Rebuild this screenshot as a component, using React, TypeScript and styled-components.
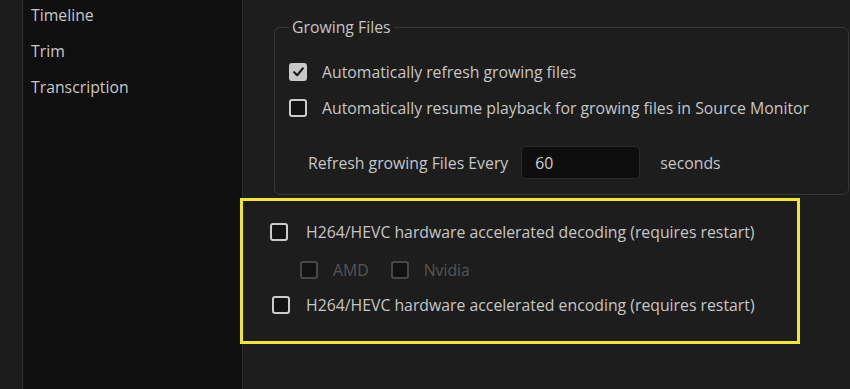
import React from "react";
import styled, { createGlobalStyle } from "styled-components";

const Global = createGlobalStyle`
  html, body { margin: 0; padding: 0; background: #1d1d1d; }
  body { font-family: "Open Sans", "Noto Sans", sans-serif; }
  * { box-sizing: border-box; }
`;

const Page = styled.div`
  display: flex;
  width: 850px;
  height: 389px;
  overflow: hidden;
  background: #1d1d1d;
  color: #c6c6c6;
  font-size: 15.8px;
`;

const LeftStrip = styled.div`
  width: 23px;
  flex: none;
  background: #1b1b1b;
  border-right: 1px solid #2e2e2e;
`;

const Sidebar = styled.nav`
  width: 220px;
  flex: none;
  background: #0f0f0f;
  border-left: 1px solid #161616;
  border-right: 1px solid #2d2d2d;
  display: flex;
  flex-direction: column;
  gap: 16px;
  padding: 5px 0 0 7px;
`;

const NavItem = styled.div`
  line-height: 20px;
  height: 20px;
  color: #c8c8c8;
`;

const Main = styled.main`
  flex: 1;
  min-width: 0;
  padding: 17px 0 0 31px;
  display: flex;
  flex-direction: column;
  align-items: flex-start;
`;

const Group = styled.fieldset`
  margin: 0;
  width: 575px;
  border: 1px solid #353535;
  border-radius: 6px;
  padding: 25px 14px 15px 14px;
  display: flex;
  flex-direction: column;
`;

const Legend = styled.legend`
  padding: 0 3px;
  line-height: 20px;
  color: #c4c4c4;
`;

const Row = styled.label<{ $indent?: number; $gap?: number; $top?: number }>`
  display: flex;
  align-items: center;
  height: 20px;
  line-height: 20px;
  margin-top: ${(p) => p.$top ?? 0}px;
  padding-left: ${(p) => p.$indent ?? 0}px;
  gap: ${(p) => p.$gap ?? 15}px;
  white-space: nowrap;
`;

const Box = styled.span<{ $checked?: boolean; $disabled?: boolean }>`
  width: 18px;
  height: 18px;
  flex: none;
  border-radius: 3px;
  border: 2px solid ${(p) => (p.$disabled ? "#474747" : "#cacaca")};
  background: ${(p) => (p.$checked ? "#c8c8c8" : "#121212")};
  display: flex;
  align-items: center;
  justify-content: center;
`;

const Label = styled.span<{ $disabled?: boolean }>`
  color: ${(p) => (p.$disabled ? "#555555" : "#c6c6c6")};
`;

const FieldRow = styled.div`
  display: flex;
  align-items: center;
  margin-top: 28px;
  padding-left: 19px;
  height: 33px;
`;

const NumberInput = styled.div`
  width: 119px;
  height: 33px;
  margin-left: 13px;
  margin-right: 20px;
  background: #0e0e0e;
  border: 1px solid #2a2a2a;
  border-radius: 4px;
  display: flex;
  align-items: center;
  padding-left: 13px;
  color: #cfcfcf;
`;

const Highlight = styled.section`
  margin: 3px 0 0 -34px;
  width: 560px;
  height: 146px;
  border: 3px solid #f2e52b;
  display: flex;
  flex-direction: column;
  padding-top: 21px;
`;

const SubRow = styled.div`
  display: flex;
  align-items: center;
  gap: 22px;
  margin-top: 18px;
  padding-left: 57px;
`;

const Check = ({ checked, disabled }: { checked?: boolean; disabled?: boolean }) => (
  <Box $checked={checked} $disabled={disabled}>
    {checked && (
      <svg width="11" height="10" viewBox="0 0 11 10">
        <path d="M1.2 5.2 L4.2 8.2 L9.8 1.4" fill="none" stroke="#1a1a1a" strokeWidth="2.2" strokeLinecap="round" strokeLinejoin="round" />
      </svg>
    )}
  </Box>
);

export default function App() {
  return (
    <>
      <Global />
      <Page>
        <LeftStrip />
        <Sidebar>
          <NavItem>Timeline</NavItem>
          <NavItem>Trim</NavItem>
          <NavItem>Transcription</NavItem>
        </Sidebar>
        <Main>
          <Group>
            <Legend>Growing Files</Legend>
            <Row>
              <Check checked />
              <Label>Automatically refresh growing files</Label>
            </Row>
            <Row $top={16}>
              <Check />
              <Label>Automatically resume playback for growing files in Source Monitor</Label>
            </Row>
            <FieldRow>
              <Label>Refresh growing Files Every</Label>
              <NumberInput>60</NumberInput>
              <Label>seconds</Label>
            </FieldRow>
          </Group>
          <Highlight>
            <Row $indent={27} $gap={18}>
              <Check />
              <Label>H264/HEVC hardware accelerated decoding (requires restart)</Label>
            </Row>
            <SubRow>
              <Row $gap={15}>
                <Check disabled />
                <Label $disabled>AMD</Label>
              </Row>
              <Row $gap={15}>
                <Check disabled />
                <Label $disabled>Nvidia</Label>
              </Row>
            </SubRow>
            <Row $indent={29} $gap={16} $top={15}>
              <Check />
              <Label>H264/HEVC hardware accelerated encoding (requires restart)</Label>
            </Row>
          </Highlight>
        </Main>
      </Page>
    </>
  );
}
